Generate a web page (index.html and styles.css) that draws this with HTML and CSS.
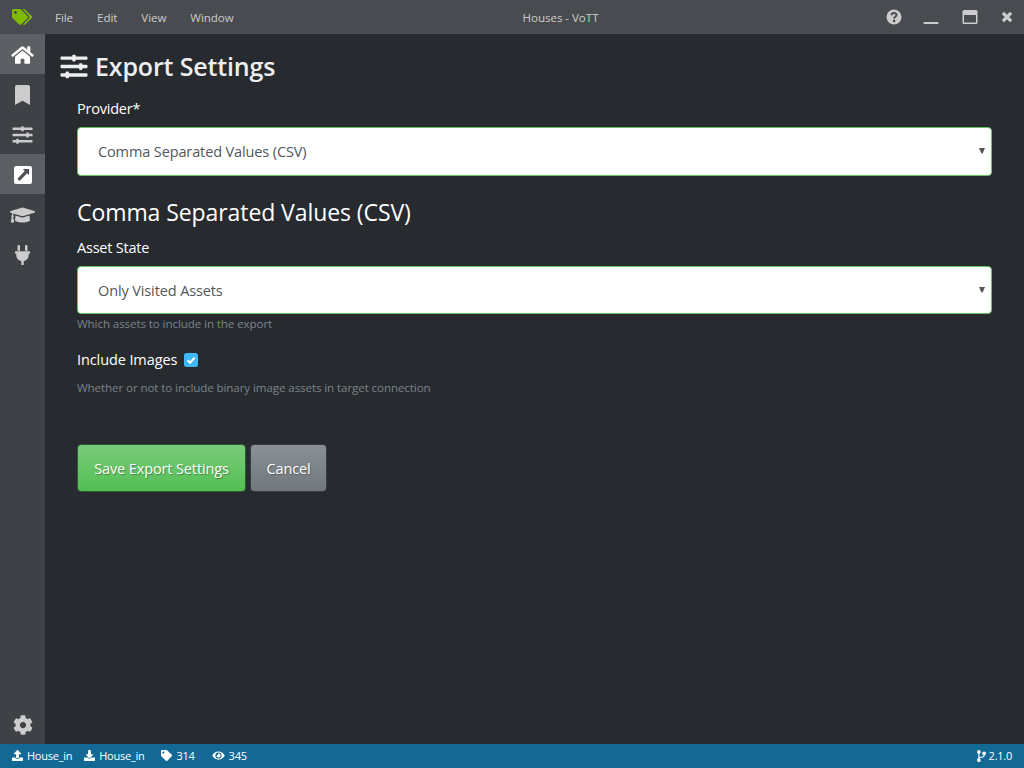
FILE: index.html
```html
<!DOCTYPE html>
<html lang="en">
<head>
<meta charset="utf-8">
<title>Houses - VoTT</title>
<link rel="stylesheet" href="styles.css">
</head>
<body>
<svg class="defs" width="0" height="0" aria-hidden="true">
  <symbol id="sliders" viewBox="0 0 512 512"><path d="M496 384H160v-16c0-8.800-7.200-16-16-16h-32c-8.800 0-16 7.200-16 16v16H16c-8.800 0-16 7.200-16 16v32c0 8.800 7.200 16 16 16h80v16c0 8.800 7.200 16 16 16h32c8.800 0 16-7.200 16-16v-16h336c8.800 0 16-7.200 16-16v-32c0-8.800-7.200-16-16-16zm0-160h-80v-16c0-8.800-7.200-16-16-16h-32c-8.800 0-16 7.200-16 16v16H16c-8.800 0-16 7.200-16 16v32c0 8.800 7.200 16 16 16h336v16c0 8.800 7.200 16 16 16h32c8.800 0 16-7.200 16-16v-16h80c8.800 0 16-7.200 16-16v-32c0-8.800-7.200-16-16-16zm0-160H288V48c0-8.800-7.200-16-16-16h-32c-8.800 0-16 7.200-16 16v16H16C7.200 64 0 71.200 0 80v32c0 8.800 7.200 16 16 16h208v16c0 8.800 7.200 16 16 16h32c8.800 0 16-7.200 16-16v-16h208c8.800 0 16-7.200 16-16V80c0-8.800-7.200-16-16-16z"/></symbol>
</svg>
<header class="titlebar">
  <svg class="logo" viewBox="0 0 640 512"><path d="M497.941 225.941L286.059 14.059A48 48 0 0 0 252.118 0H48C21.490 0 0 21.490 0 48v204.118a48 48 0 0 0 14.059 33.941l211.882 211.882c18.744 18.745 49.136 18.746 67.882 0l204.118-204.118c18.745-18.745 18.745-49.137 0-67.882zM112 160c-26.510 0-48-21.490-48-48s21.490-48 48-48 48 21.490 48 48-21.490 48-48 48zm513.941 133.823L421.823 497.941c-18.745 18.745-49.137 18.745-67.882 0l-.36-.36L527.640 323.522c16.999-16.999 26.360-39.600 26.360-63.640s-9.362-46.641-26.360-63.640L331.397 0h48.721a48 48 0 0 1 33.941 14.059l211.882 211.882c18.745 18.745 18.745 49.137 0 67.882z"/></svg>
  <nav class="menu"><span class="menu-item">File</span><span class="menu-item">Edit</span><span class="menu-item">View</span><span class="menu-item">Window</span></nav>
  <div class="window-title">Houses - VoTT</div>
  <div class="window-controls">
    <svg class="control-help" viewBox="0 0 16 16"><circle cx="8" cy="8" r="7.500"/><path class="question" d="M5.500 6.200C5.700 3.300 10.500 3.300 10.500 6c0 1.800-2.400 1.700-2.400 3.500"/><circle class="question-dot" cx="8.100" cy="11.900" r="1.300"/></svg>
    <svg class="control-minimize" viewBox="0 0 16 16"><rect x=".5" y="13" width="15" height="2" rx=".7"/></svg>
    <svg class="control-maximize" viewBox="0 0 16 16"><path fill-rule="evenodd" d="M2 1h12a1.500 1.500 0 0 1 1.500 1.500v11A1.500 1.500 0 0 1 14 15H2a1.500 1.500 0 0 1-1.500-1.500v-11A1.500 1.500 0 0 1 2 1zm0 5v7.500h12V6z"/></svg>
    <svg class="control-close" viewBox="0 0 12 12"><path d="M1.900 1.900l8.200 8.200M10.100 1.900l-8.200 8.200"/></svg>
  </div>
</header>
<div class="workspace">
  <aside class="sidebar">
    <a class="side-item active"><svg class="icon-home" viewBox="0 0 576 512"><path d="M280.370 148.260L96 300.110V464a16 16 0 0 0 16 16l112.060-.29a16 16 0 0 0 15.920-16V368a16 16 0 0 1 16-16h64a16 16 0 0 1 16 16v95.640a16 16 0 0 0 16 16.050L464 480a16 16 0 0 0 16-16V300L295.670 148.260a12.190 12.190 0 0 0-15.300 0zM571.600 251.470L488 182.560V44.050a12 12 0 0 0-12-12h-56a12 12 0 0 0-12 12v72.610L318.470 43a48 48 0 0 0-61 0L4.340 251.470a12 12 0 0 0-1.600 16.900l25.500 31A12 12 0 0 0 45.150 301l235.220-193.740a12.190 12.190 0 0 1 15.300 0L530.900 301a12 12 0 0 0 16.900-1.600l25.500-31a12 12 0 0 0-1.700-16.930z"/></svg></a>
    <a class="side-item"><svg class="icon-bookmark" viewBox="0 0 384 512"><path d="M0 512V48C0 21.490 21.490 0 48 0h288c26.510 0 48 21.490 48 48v464L192 400 0 512z"/></svg></a>
    <a class="side-item"><svg class="icon-sliders"><use href="#sliders"/></svg></a>
    <a class="side-item active"><svg class="icon-export" viewBox="0 0 18 18"><rect width="18" height="18" rx="2"/><path class="arrow" d="M8.800 3H15v6.200l-1.900-1.900-7.600 7.600-2.100-2.100 7.400-7.700z"/></svg></a>
    <a class="side-item"><svg class="icon-cap" viewBox="0 0 640 512"><path d="M622.340 153.200L343.400 67.500c-15.200-4.670-31.600-4.670-46.790 0L17.660 153.200c-23.540 7.230-23.540 38.360 0 45.590l48.630 14.940c-10.670 13.190-17.230 29.280-17.880 46.900C38.780 266.150 32 276.110 32 288c0 10.780 5.680 19.850 13.860 25.650L20.330 428.530C18.110 438.520 25.710 448 35.940 448h56.110c10.240 0 17.840-9.480 15.620-19.470L82.140 313.650C90.320 307.850 96 298.780 96 288c0-11.570-6.470-21.250-15.660-26.870.76-15.020 8.440-28.300 20.690-36.720L296.600 284.500c9.060 2.780 26.440 6.250 46.790 0l278.950-85.700c23.550-7.240 23.550-38.360 0-45.600zM352.790 315.090c-28.530 8.760-52.840 3.920-65.590 0l-145.020-44.550L128 384c0 35.350 85.960 64 192 64s192-28.650 192-64l-14.180-113.470-145.030 44.560z"/></svg></a>
    <a class="side-item"><svg class="icon-plug" viewBox="0 0 384 512"><path d="M256 144V32c0-17.673 14.327-32 32-32s32 14.327 32 32v112h-64zm112 16H16c-8.837 0-16 7.163-16 16v32c0 8.837 7.163 16 16 16h16v32c0 77.406 54.969 141.971 128 156.796V512h64v-99.204c73.031-14.825 128-79.390 128-156.796v-32h16c8.837 0 16-7.163 16-16v-32c0-8.837-7.163-16-16-16zm-240-16V32c0-17.673-14.327-32-32-32S64 14.327 64 32v112h64z"/></svg></a>
    <a class="side-item settings"><svg class="icon-gear" viewBox="0 0 512 512"><path d="M487.400 315.700l-42.600-24.600c4.300-23.200 4.300-47 0-70.200l42.600-24.600c4.900-2.800 7.100-8.600 5.500-14-11.100-35.600-30-67.800-54.700-94.600-3.800-4.100-10-5.100-14.800-2.300L380.800 110c-17.900-15.400-38.500-27.300-60.800-35.100V25.800c0-5.600-3.900-10.500-9.400-11.700-36.700-8.200-74.300-7.800-109.200 0-5.500 1.200-9.400 6.100-9.400 11.700V75c-22.200 7.900-42.800 19.800-60.800 35.100L88.700 85.500c-4.900-2.800-11-1.900-14.800 2.300-24.700 26.700-43.600 58.900-54.700 94.600-1.700 5.400.6 11.200 5.500 14L67.300 221c-4.300 23.200-4.300 47 0 70.200l-42.600 24.600c-4.900 2.800-7.100 8.600-5.500 14 11.100 35.600 30 67.800 54.700 94.600 3.800 4.100 10 5.100 14.800 2.300l42.600-24.600c17.900 15.400 38.500 27.300 60.800 35.100v49.200c0 5.600 3.900 10.500 9.400 11.700 36.700 8.200 74.300 7.800 109.200 0 5.500-1.200 9.400-6.100 9.400-11.700v-49.200c22.200-7.900 42.800-19.800 60.800-35.100l42.600 24.600c4.900 2.800 11 1.900 14.800-2.300 24.700-26.700 43.600-58.900 54.700-94.600 1.500-5.500-.7-11.300-5.600-14.100zM256 336c-44.100 0-80-35.900-80-80s35.900-80 80-80 80 35.900 80 80-35.900 80-80 80z"/></svg></a>
  </aside>
  <main class="content">
    <h1 class="page-title"><svg class="title-icon"><use href="#sliders"/></svg><span>Export Settings</span></h1>
    <form class="export-form">
      <label class="field-label provider-label">Provider*</label>
      <div class="select provider"><span>Comma Separated Values (CSV)</span><svg class="caret" viewBox="0 0 6 6"><path d="M0 0h6L3.600 5.500H2.400z"/></svg></div>
      <h2 class="section-title">Comma Separated Values (CSV)</h2>
      <label class="field-label asset-label">Asset State</label>
      <div class="select state"><span>Only Visited Assets</span><svg class="caret" viewBox="0 0 6 6"><path d="M0 0h6L3.600 5.500H2.400z"/></svg></div>
      <p class="help state-help">Which assets to include in the export</p>
      <div class="check-row"><label class="field-label include-label">Include Images</label><svg class="checkbox" viewBox="0 0 14 14"><rect width="14" height="14" rx="2.500"/><path d="M3.600 7.300l2.400 2.400 4.600-5"/></svg></div>
      <p class="help image-help">Whether or not to include binary image assets in target connection</p>
      <div class="actions"><button class="button save" type="button">Save Export Settings</button><button class="button cancel" type="button">Cancel</button></div>
    </form>
  </main>
</div>
<footer class="statusbar">
  <span class="status source"><svg viewBox="0 0 512 512"><path d="M296 384h-80c-13.300 0-24-10.700-24-24V192h-87.700c-17.800 0-26.700-21.500-14.100-34.100L242.300 5.700c7.500-7.500 19.800-7.500 27.300 0l152.200 152.200c12.600 12.600 3.700 34.100-14.100 34.100H320v168c0 13.300-10.700 24-24 24zm216-8v112c0 13.300-10.700 24-24 24H24c-13.300 0-24-10.700-24-24V376c0-13.300 10.700-24 24-24h136v8c0 30.900 25.100 56 56 56h80c30.900 0 56-25.100 56-56v-8h136c13.300 0 24 10.700 24 24z"/></svg><span>House_in</span></span>
  <span class="status target"><svg viewBox="0 0 512 512"><path d="M216 0h80c13.300 0 24 10.700 24 24v168h87.700c17.800 0 26.700 21.500 14.100 34.100L269.700 378.300c-7.500 7.500-19.800 7.500-27.300 0L90.100 226.100c-12.600-12.600-3.700-34.100 14.100-34.100H192V24c0-13.300 10.700-24 24-24zm296 376v112c0 13.300-10.700 24-24 24H24c-13.300 0-24-10.700-24-24V376c0-13.300 10.700-24 24-24h146.700l49 49c20.100 20.100 52.500 20.100 72.600 0l49-49H488c13.300 0 24 10.700 24 24z"/></svg><span>House_in</span></span>
  <span class="status tags"><svg viewBox="0 0 512 512"><path d="M0 252.118V48C0 21.490 21.490 0 48 0h204.118a48 48 0 0 1 33.941 14.059l211.882 211.882c18.745 18.745 18.745 49.137 0 67.882L293.823 497.941c-18.745 18.745-49.137 18.745-67.882 0L14.059 286.059A48 48 0 0 1 0 252.118zM112 64c-26.510 0-48 21.490-48 48s21.490 48 48 48 48-21.490 48-48-21.490-48-48-48z"/></svg><span>314</span></span>
  <span class="status visited"><svg class="eye" viewBox="0 0 576 512"><path d="M572.520 241.400C518.290 135.590 410.930 64 288 64S57.680 135.640 3.480 241.410a32.350 32.350 0 0 0 0 29.190C57.710 376.410 165.070 448 288 448s230.320-71.640 284.520-177.410a32.350 32.350 0 0 0 0-29.190zM288 400a144 144 0 1 1 144-144 143.930 143.930 0 0 1-144 144zm0-240a95.310 95.310 0 0 0-25.310 3.790 47.850 47.850 0 0 1-66.900 66.900A95.780 95.780 0 1 0 288 160z"/></svg><span>345</span></span>
  <span class="status version"><svg class="branch" viewBox="0 0 384 512"><path d="M384 144c0-44.200-35.800-80-80-80s-80 35.800-80 80c0 36.400 24.300 67.100 57.500 76.800-.6 16.100-4.200 28.500-11 36.900-15.400 19.200-49.300 22.400-85.200 25.700-28.200 2.600-57.400 5.400-81.300 16.900v-144c32.500-10.200 56-40.500 56-76.300 0-44.200-35.800-80-80-80S0 35.800 0 80c0 35.800 23.500 66.100 56 76.300v199.300C23.500 365.900 0 396.200 0 432c0 44.200 35.800 80 80 80s80-35.800 80-80c0-34-21.200-63.100-51.200-74.600 3.100-5.200 7.800-9.800 14.900-13.400 16.200-8.200 40.400-10.400 66.100-12.800 42.200-3.900 90-8.400 118.200-43.400 14-17.400 21.100-39.800 21.600-67.900 31.600-10.800 54.400-40.700 54.400-75.900z"/></svg><span>2.1.0</span></span>
</footer>
</body>
</html>
```
FILE: styles.css
```css
* { box-sizing: border-box; }
body {
  margin: 0;
  height: 100vh;
  display: flex;
  flex-direction: column;
  overflow: hidden;
  background: #272b30;
  color: #fff;
  font-family: "Open Sans", "Noto Sans", sans-serif;
  font-size: 14.5px;
  letter-spacing: -.12px;
}
svg { display: block; flex: none; fill: currentColor; }
.defs { position: absolute; }
h1, h2, p { margin: 0; font-weight: 400; }

.titlebar {
  height: 34px;
  flex: none;
  display: grid;
  grid-template-columns: 43px 1fr auto 1fr;
  align-items: center;
  background: #484b50;
  color: #ccc;
  font-size: 11.6px;
}
.logo { width: 20px; height: 16px; margin-left: 12px; color: #7fba00; }
.menu { display: flex; }
.menu-item { padding: 0 12px; letter-spacing: -.08px; }
.window-title { margin-left: 54px; letter-spacing: -.05px; }
.window-controls { display: flex; justify-content: flex-end; align-items: center; padding-right: 11px; }
.control-help { width: 16px; height: 16px; margin-right: 21px; }
.control-minimize { width: 16px; height: 16px; margin-right: 23px; }
.question { fill: none; stroke: #484b50; stroke-width: 2; }
.question-dot { fill: #484b50; }
.control-minimize { align-self: flex-end; }
.control-maximize { width: 16px; height: 16px; margin-right: 23px; }
.control-close { width: 12px; height: 12px; fill: none; stroke: currentColor; stroke-width: 3.2; }

.workspace { flex: 1; display: flex; min-height: 0; }
.sidebar { width: 45px; display: flex; flex-direction: column; background: #3e4146; color: #ccc; }
.side-item { height: 40px; display: flex; justify-content: center; align-items: center; padding-top: 1px; }
.active { background: #5c5f63; color: #fff; }
.settings { margin-top: auto; }
.icon-home { width: 23px; height: 20px; }
.icon-bookmark { width: 15px; height: 20px; }
.icon-sliders { width: 21px; height: 20px; }
.icon-export { width: 18px; height: 18px; }
.arrow { fill: #4e5155; }
.icon-cap { width: 25px; height: 20px; }
.icon-plug { width: 15px; height: 20px; }
.icon-gear { width: 20px; height: 20px; }

.content { flex: 1; padding: 16px 32px 0 15px; }
.page-title { display: flex; align-items: center; height: 32px; gap: 7px; color: #eee; font-size: 25px; font-weight: 600; letter-spacing: -.15px; }
.title-icon { width: 28px; height: 27px; }
.export-form { margin-left: 17px; }
.field-label { display: block; height: 22px; line-height: 22px; letter-spacing: -.22px; }
.provider-label { margin: 16px 0 7px; }
.select {
  display: flex;
  justify-content: space-between;
  align-items: center;
  height: 49px;
  padding: 0 6px 0 20px;
  background: #fff;
  border: 1px solid #62c462;
  border-radius: 4px;
  color: #52575c;
}
.provider .caret { margin-bottom: 2px; }
.caret { width: 6px; height: 6px; }
.section-title { margin: 21px 0 10px; height: 30px; line-height: 30px; font-size: 23px; letter-spacing: -.08px; }
.asset-label { margin-bottom: 7px; }
.state { height: 48px; }
.help { height: 18px; line-height: 18px; color: #7a8288; font-size: 11.6px; letter-spacing: -.1px; }
.state-help { margin-top: 1px; }
.check-row { display: flex; align-items: center; gap: 7px; margin-top: 16px; }
.include-label { letter-spacing: -.1px; }
.checkbox { width: 14px; height: 14px; }
.checkbox rect { fill: #3fb8f5; }
.checkbox path { fill: none; stroke: #fff; stroke-width: 2; }
.image-help { margin-top: 8px; }
.actions { display: flex; gap: 4px; margin-top: 47px; }
.button { height: 48px; padding: 0; border: 1px solid #2a3a31; border-radius: 4px; color: #fff; font: inherit; letter-spacing: inherit; text-shadow: 1px 1px 1px rgba(0, 0, 0, .3); }
.save { width: 169px; background: linear-gradient(#78cc78, #53be53); border-color: #305a36; }
.cancel { width: 77px; background: linear-gradient(#8a9196, #70787d); border-color: #373c41; }

.statusbar { display: flex; align-items: center; height: 24px; flex: none; padding: 0 12px 1px; background: #146994; font-size: 11px; letter-spacing: -.25px; }
.status { display: flex; align-items: center; gap: 4px; margin-right: 12px; }
.status svg { width: 11px; height: 11px; }
.target { margin-right: 17px; }
.tags { margin-right: 17px; }
.status .eye { width: 13px; }
.version { margin: 0 0 0 auto; gap: 3px; }
.status .branch { width: 9px; height: 12px; }
```
